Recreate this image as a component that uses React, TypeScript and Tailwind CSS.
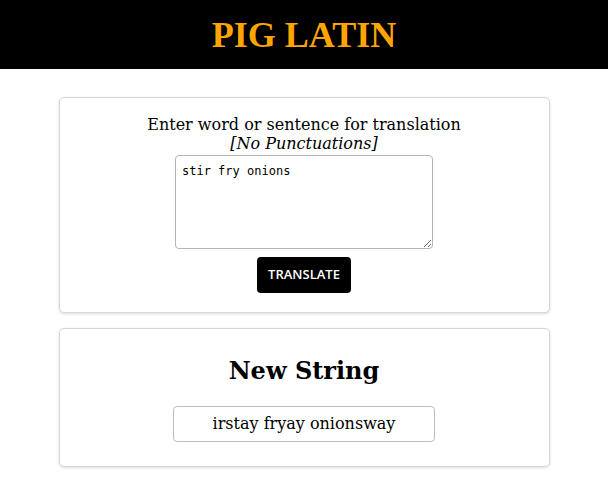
import { useState } from 'react';

function toPigLatin(text: string) {
  return text
    .trim()
    .split(/\s+/)
    .filter(Boolean)
    .map((word) => {
      const lower = word.toLowerCase();
      if (/^[aeiou]/.test(lower)) return lower + 'way';
      const match = lower.match(/^([^aeiou]+)(.*)$/);
      if (!match) return lower + 'ay';
      if (!match[2]) return lower + 'ay';
      return match[2] + match[1] + 'ay';
    })
    .join(' ');
}

function App() {
  const [input, setInput] = useState('stir fry onions');
  const [result, setResult] = useState('irstay fryay onionsway');

  return (
    <div className="min-h-[502px] bg-white font-['DejaVu_Serif',serif] text-black">
      <header className="bg-black h-[69px] flex items-center justify-center">
        <h1 className="font-['Liberation_Serif',serif] font-bold text-[36px] text-[#ffa500] leading-none">
          PIG LATIN
        </h1>
      </header>

      <main className="w-[491px] mx-auto pt-7 flex flex-col gap-[15px]">
        <section className="border border-[#d6d6d6] rounded-[5px] shadow-[0_1px_3px_rgba(0,0,0,0.15)] pt-[17px] pb-[19px] flex flex-col items-center">
          <p className="text-[16px] leading-[19px] text-center">
            Enter word or sentence for translation
          </p>
          <p className="text-[16px] leading-[19px] italic text-center">[No Punctuations]</p>
          <textarea
            value={input}
            onChange={(e) => setInput(e.target.value)}
            className="mt-[2px] w-[258px] h-[94px] border border-[#b5b5b5] rounded-[4px] px-[6px] pt-[8px] pb-[6px] font-['DejaVu_Sans_Mono',monospace] text-[12px] leading-[15px] outline-none resize"
          />
          <button
            onClick={() => setResult(toPigLatin(input))}
            className="mt-[8px] w-[94px] h-[36px] bg-black text-white rounded-[4px] font-['Open_Sans',sans-serif] font-semibold text-[13px]"
          >
            TRANSLATE
          </button>
        </section>

        <section className="border border-[#d6d6d6] rounded-[5px] shadow-[0_1px_3px_rgba(0,0,0,0.15)] pt-[28px] pb-[24px] flex flex-col items-center">
          <h2 className="font-bold text-[24px] leading-[28px]">New String</h2>
          <div className="mt-[21px] w-[262px] h-[36px] border border-[#bdbdbd] rounded-[4px] flex items-center justify-center text-[16px]">
            {result}
          </div>
        </section>
      </main>
    </div>
  );
}

export default App;
